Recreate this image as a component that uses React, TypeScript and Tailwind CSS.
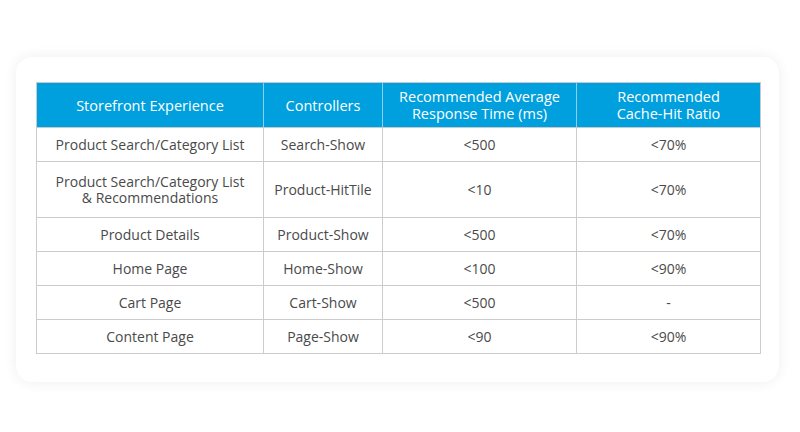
const rows: [string, string, string, string][] = [
  ['Product Search/Category List', 'Search-Show', '<500', '<70%'],
  ['Product Search/Category List\n& Recommendations', 'Product-HitTile', '<10', '<70%'],
  ['Product Details', 'Product-Show', '<500', '<70%'],
  ['Home Page', 'Home-Show', '<100', '<90%'],
  ['Cart Page', 'Cart-Show', '<500', '-'],
  ['Content Page', 'Page-Show', '<90', '<90%'],
]

export default function App() {
  return (
    <div className="h-[432px] w-[800px] bg-white pt-[57px] pl-[16px] font-['Open_Sans',sans-serif]">
      <div className="w-[763px] rounded-[16px] bg-white pt-[25px] pb-[28px] pl-[20px] shadow-[0_0_14px_rgba(0,0,0,0.07)]">
        <table className="w-[724px] table-fixed border-collapse text-center">
          <colgroup>
            <col className="w-[227px]" />
            <col className="w-[119px]" />
            <col className="w-[194px]" />
            <col className="w-[184px]" />
          </colgroup>
          <thead>
            <tr className="h-[45px] bg-[#009fdd] text-[14.5px] leading-[17px] text-white">
              <th className="border border-[#c9c9c9] border-r-[#8fcfee] font-normal">Storefront Experience</th>
              <th className="border border-[#c9c9c9] border-x-[#8fcfee] font-normal">Controllers</th>
              <th className="border border-[#c9c9c9] border-x-[#8fcfee] font-normal">
                Recommended Average
                <br />
                Response Time (ms)
              </th>
              <th className="border border-[#c9c9c9] border-l-[#8fcfee] font-normal">
                Recommended
                <br />
                Cache-Hit Ratio
              </th>
            </tr>
          </thead>
          <tbody className="text-[14px] leading-[15.5px] text-[#4a4a4a]">
            {rows.map((r, i) => (
              <tr key={i} className={i === 1 ? 'h-[56px]' : 'h-[34px]'}>
                {r.map((c, j) => (
                  <td key={j} className="whitespace-pre-line border border-[#cccccc] px-1">
                    {c}
                  </td>
                ))}
              </tr>
            ))}
          </tbody>
        </table>
      </div>
    </div>
  )
}
